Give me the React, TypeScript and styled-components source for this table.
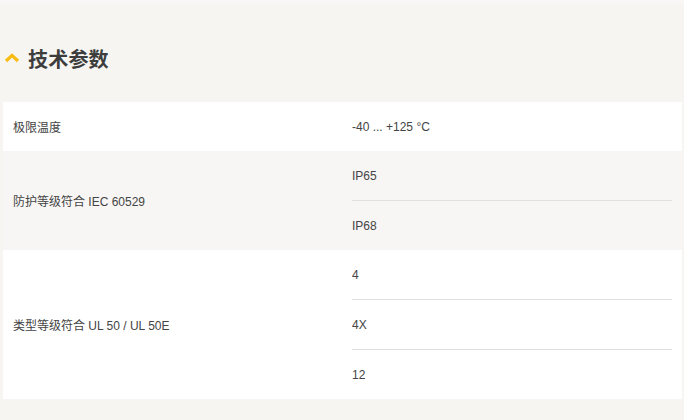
import React from "react";
import styled, { createGlobalStyle } from "styled-components";

const Global = createGlobalStyle`
  html, body { margin: 0; padding: 0; background: #f6f5f2; }
  body { font-family: "Liberation Sans", "Noto Sans CJK SC", sans-serif; color: #444444; }
`;

const Page = styled.div`
  width: 684px;
  height: 420px;
  background: linear-gradient(#f9f8f6 0px, #f6f5f2 6px);
  box-sizing: border-box;
  padding: 0 2px 0 3px;
  overflow: hidden;
`;

const Header = styled.div`
  display: flex;
  align-items: center;
  gap: 8px;
  height: 102px;
  padding: 14px 0 0 1px;
  box-sizing: border-box;
`;

const Title = styled.h2`
  margin: 0;
  font-family: "Noto Sans CJK SC", sans-serif;
  font-size: 20px;
  font-weight: 700;
  color: #3d3d3d;
  letter-spacing: 0.2px;
`;

const Table = styled.div`
  display: flex;
  flex-direction: column;
`;

const Row = styled.div<{ $alt?: boolean }>`
  display: grid;
  grid-template-columns: 339px 1fr;
  background: ${(p) => (p.$alt ? "#f7f6f4" : "#ffffff")};
`;

const Label = styled.div`
  display: flex;
  align-items: center;
  padding-left: 10px;
  font-size: 12px;
  color: #444444;
`;

const Values = styled.div`
  display: flex;
  flex-direction: column;
  margin-left: 10px;
  margin-right: 10px;
`;

const ValueCell = styled.div`
  height: 49px;
  display: flex;
  align-items: center;
  font-size: 12px;
  color: #444444;
  & + & {
    border-top: 1px solid #e0e0e0;
  }
`;

const Chevron = () => (
  <svg width="16" height="12" viewBox="0 0 16 12">
    <path d="M2 9 L8 3.5 L14 9" fill="none" stroke="#f7bc16" strokeWidth="3.2" />
  </svg>
);

const rows: { label: string; values: string[] }[] = [
  { label: "极限温度", values: ["-40 ... +125 °C"] },
  { label: "防护等级符合 IEC 60529", values: ["IP65", "IP68"] },
  { label: "类型等级符合 UL 50 / UL 50E", values: ["4", "4X", "12"] },
];

export default function App() {
  return (
    <>
      <Global />
      <Page>
        <Header>
          <Chevron />
          <Title>技术参数</Title>
        </Header>
        <Table>
          {rows.map((r, i) => (
            <Row key={r.label} $alt={i % 2 === 1}>
              <Label>{r.label}</Label>
              <Values>
                {r.values.map((v) => (
                  <ValueCell key={v}>{v}</ValueCell>
                ))}
              </Values>
            </Row>
          ))}
        </Table>
      </Page>
    </>
  );
}
